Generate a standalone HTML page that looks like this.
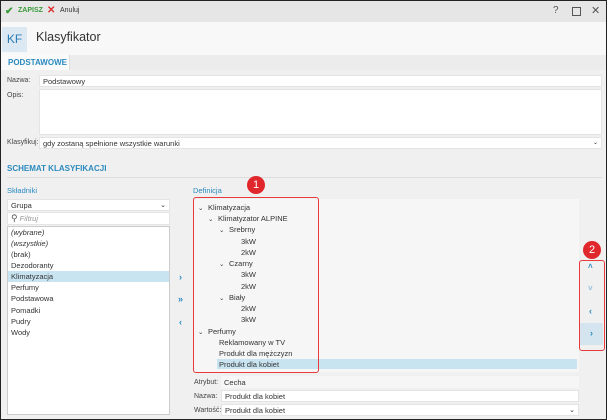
<!DOCTYPE html>
<html><head><meta charset="utf-8"><style>
*{box-sizing:border-box;margin:0;padding:0}
body{width:607px;height:420px;overflow:hidden;background:#f0f0f0;font-family:"Liberation Sans",sans-serif;font-size:7.5px;color:#333;position:relative}
.a{position:absolute}
.frame{left:0;top:0;width:607px;height:420px;border:1px solid #222;z-index:50;pointer-events:none}
.inp{background:#fff;border:1px solid #e4e4e4;padding:1px 3px;line-height:9px}
.lbl{color:#444;font-size:7px}
.blue{color:#2a8ac0}
.t{position:absolute;white-space:nowrap;line-height:11px}
.c{font-size:6.5px;display:inline-block;width:10px}
.red{border:1.5px solid #e83a3a;border-radius:3px}
.badge{width:18px;height:18px;border-radius:50%;background:#e0272b;color:#fff;font-size:11px;text-align:center;line-height:18px}
.arr{color:#2a8ac0;font-size:9px;font-weight:bold}
</style></head><body>
<div class="a frame"></div>
<div class="a" style="left:0;top:0;width:607px;height:22px;background:#e6e6e6"></div>
<div class="a" style="left:5px;top:6px;color:#3a9a3a;font-size:10px;font-weight:bold">✔</div>
<div class="a" style="left:18px;top:7px;color:#3a9a3a;font-weight:bold;font-size:7px">ZAPISZ</div>
<div class="a" style="left:47px;top:5px;color:#e03030;font-size:10px;font-weight:bold">✕</div>
<div class="a" style="left:60px;top:7px;font-size:7px">Anuluj</div>
<div class="a" style="left:553px;top:5px;font-size:10px;color:#555">?</div>
<div class="a" style="left:572px;top:7px;width:9px;height:9px;border:1.5px solid #555"></div>
<div class="a" style="left:591px;top:4px;font-size:11px;color:#555">✕</div>
<div class="a" style="left:0;top:22px;width:607px;height:33px;background:#f8f8f8"></div>
<div class="a" style="left:2px;top:27px;width:25px;height:25px;background:#dce9f3;color:#2a7ab5;font-size:12px;text-align:center;line-height:25px">KF</div>
<div class="a" style="left:36px;top:30px;font-size:12.5px;color:#333">Klasyfikator</div>
<div class="a" style="left:0;top:55px;width:607px;height:15px;background:#ececec"></div>
<div class="a blue" style="left:0;top:55px;width:70px;height:15px;background:#fafafa;border-right:1px solid #ddd;font-weight:bold;font-size:8px;padding:3px 0 0 8px">PODSTAWOWE</div>
<div class="a lbl" style="left:7px;top:77px">Nazwa:</div>
<div class="a inp" style="left:39px;top:75px;width:563px;height:12px">Podstawowy</div>
<div class="a lbl" style="left:7px;top:92px">Opis:</div>
<div class="a inp" style="left:39px;top:89px;width:563px;height:46px"></div>
<div class="a lbl" style="left:7px;top:139px">Klasyfikuj:</div>
<div class="a inp" style="left:39px;top:137px;width:563px;height:12px">gdy zostaną spełnione wszystkie warunki<span style="float:right;font-size:6px">⌄</span></div>
<div class="a blue" style="left:7px;top:164px;font-weight:bold;font-size:8px">SCHEMAT KLASYFIKACJI</div>
<div class="a" style="left:7px;top:177px;width:595px;height:1px;background:#ddd"></div>
<div class="a blue" style="left:7px;top:186px">Składniki</div>
<div class="a inp" style="left:7px;top:199px;width:163px;height:12px">Grupa<span style="float:right;font-size:7px">⌄</span></div>
<div class="a inp" style="left:7px;top:212px;width:163px;height:13px;color:#999;font-style:italic"><span style="font-style:normal;color:#555;font-size:9px">⚲</span> Filtruj</div>
<div class="a" style="left:7px;top:226px;width:163px;height:189px;background:#fff;border:1px solid #ccc"></div>
<div class="t" style="left:11px;top:227px;font-style:italic">(wybrane)</div>
<div class="t" style="left:11px;top:238px;font-style:italic">(wszystkie)</div>
<div class="t" style="left:11px;top:249px">(brak)</div>
<div class="t" style="left:11px;top:260px">Dezodoranty</div>
<div class="a" style="left:8px;top:271px;width:161px;height:11px;background:#c8e4f1"></div>
<div class="t" style="left:11px;top:271px">Klimatyzacja</div>
<div class="t" style="left:11px;top:282px">Perfumy</div>
<div class="t" style="left:11px;top:293px">Podstawowa</div>
<div class="t" style="left:11px;top:305px">Pomadki</div>
<div class="t" style="left:11px;top:316px">Pudry</div>
<div class="t" style="left:11px;top:327px">Wody</div>
<div class="a arr" style="left:179px;top:272px">›</div>
<div class="a arr" style="left:178px;top:294px">»</div>
<div class="a arr" style="left:179px;top:317px">‹</div>
<div class="a blue" style="left:193px;top:186px">Definicja</div>
<div class="a" style="left:193px;top:199px;width:386px;height:173px;background:#f6f6f6"></div>
<div class="a" style="left:217px;top:359px;width:360px;height:10px;background:#c8e4f1"></div>
<div class="t" style="left:198px;top:202px"><span class="c">⌄</span>Klimatyzacja</div>
<div class="t" style="left:208px;top:213px"><span class="c">⌄</span>Klimatyzator ALPINE</div>
<div class="t" style="left:219px;top:224px"><span class="c">⌄</span>Srebrny</div>
<div class="t" style="left:241px;top:236px">3kW</div>
<div class="t" style="left:241px;top:247px">2kW</div>
<div class="t" style="left:219px;top:258px"><span class="c">⌄</span>Czarny</div>
<div class="t" style="left:241px;top:269px">3kW</div>
<div class="t" style="left:241px;top:281px">2kW</div>
<div class="t" style="left:219px;top:292px"><span class="c">⌄</span>Biały</div>
<div class="t" style="left:241px;top:303px">2kW</div>
<div class="t" style="left:241px;top:314px">3kW</div>
<div class="t" style="left:198px;top:326px"><span class="c">⌄</span>Perfumy</div>
<div class="t" style="left:219px;top:337px">Reklamowany w TV</div>
<div class="t" style="left:219px;top:348px">Produkt dla mężczyzn</div>
<div class="t" style="left:219px;top:359px">Produkt dla kobiet</div>
<div class="a red" style="left:193px;top:197px;width:126px;height:176px"></div>
<div class="a badge" style="left:247px;top:176px">1</div>
<div class="a lbl" style="left:194px;top:379px">Atrybut:</div>
<div class="a" style="left:221px;top:376px;width:358px;height:12px;background:#f6f6f6;padding:2px 3px">Cecha</div>
<div class="a lbl" style="left:194px;top:393px">Nazwa:</div>
<div class="a inp" style="left:221px;top:390px;width:358px;height:12px">Produkt dla kobiet</div>
<div class="a lbl" style="left:194px;top:407px">Wartość:</div>
<div class="a inp" style="left:221px;top:404px;width:358px;height:12px">Produkt dla kobiet<span style="float:right;font-size:7px">⌄</span></div>
<div class="a" style="left:580px;top:323px;width:23px;height:22px;background:#d5e5ef"></div>
<div class="a arr" style="left:588px;top:262px;font-size:8px">˄</div>
<div class="a arr" style="left:588px;top:284px;font-size:8px;color:#8bbcd8">˅</div>
<div class="a arr" style="left:589px;top:306px">‹</div>
<div class="a arr" style="left:590px;top:328px">›</div>
<div class="a red" style="left:579px;top:260px;width:26px;height:91px"></div>
<div class="a badge" style="left:583px;top:241px">2</div>
</body></html>
